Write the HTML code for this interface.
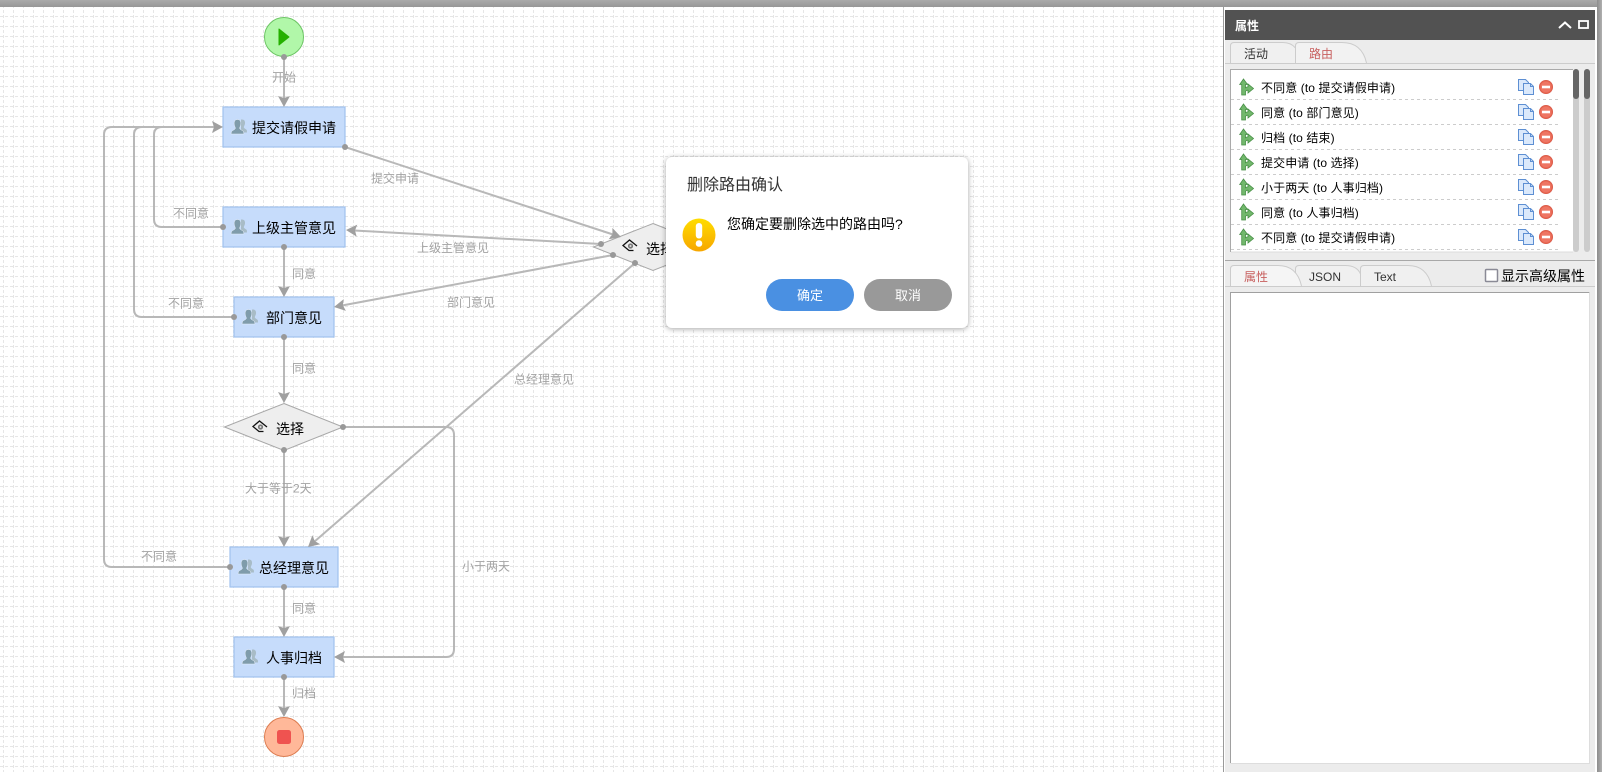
<!DOCTYPE html>
<html lang="zh">
<head>
<meta charset="utf-8">
<title>流程设计器</title>
<style>
html,body{margin:0;padding:0;width:1602px;height:772px;overflow:hidden;background:#fff}
svg{position:absolute;left:0;top:0;display:block}
text{font-family:"Liberation Sans","Noto Sans CJK SC",sans-serif}
.l{font-size:12px;fill:#a3a3a3}
.n{font-size:14px;fill:#000}
.r{font-size:12px;fill:#000;letter-spacing:.1px}
.t{font-size:12px;fill:#333}
.dlg{position:absolute;left:666px;top:157px;width:302px;height:171px;background:#fff;border-radius:6px;box-shadow:0 1px 6px rgba(0,0,0,.35);font-family:"Liberation Sans","Noto Sans CJK SC",sans-serif}
.dlg .ttl{position:absolute;left:21px;top:18px;font-size:16px;line-height:22px;color:#333;white-space:nowrap}
.dlg .msg{position:absolute;left:61px;top:57px;font-size:14px;line-height:20px;color:#000;white-space:nowrap}
.dlg .btn{position:absolute;top:122px;width:88px;height:32px;border-radius:16px;color:#fff;font-size:13px;line-height:34px;text-align:center}
</style>
</head>
<body>
<svg width="1602" height="772" viewBox="0 0 1602 772" xmlns="http://www.w3.org/2000/svg">
<defs>
<pattern id="g" width="10" height="10" patternUnits="userSpaceOnUse" x="0" y="0">
<path d="M3.5 0V3M3.5 5V8M0 6.5H3M5 6.5H8" stroke="#e6e6e6" stroke-width="1" fill="none"/>
</pattern>
<linearGradient id="tb" x1="0" y1="0" x2="0" y2="1"><stop offset="0" stop-color="#aaa"/><stop offset="1" stop-color="#979797"/></linearGradient>
<linearGradient id="rb" x1="0" y1="0" x2="1" y2="0"><stop offset="0" stop-color="#8c8c8c"/><stop offset="1" stop-color="#b0b0b0"/></linearGradient>
<path id="a" d="M0 0L-11 -6L-9 0L-11 6Z" fill="#a0a0a0"/>
<g id="p">
<path d="M11 .5C13.300 .5 14.300 2.300 14 4.500C13.800 6.300 13 7 12.800 8C12.700 9.300 14.600 9.800 15.800 11L16 13.500H10V.5Z" fill="#a8bcc7"/>
<path d="M6.500 .5C9 .5 10 2.500 9.800 5C9.600 7 8.800 8 8.600 9C8.500 10.500 11 11 12.500 12.500L13 15H0L.5 12.500C2 11 4.500 10.500 4.400 9C4.200 8 3.400 7 3.200 5C3 2.500 4 .5 6.500 .5Z" fill="#7f9cab" stroke="#e8f0fb" stroke-width=".5"/>
</g>
<g id="w">
<path d="M16 7L8.500 1L2 6.500L8 11.500L12.500 11.500" fill="none" stroke="#111" stroke-width="1.300"/>
<circle cx="9.500" cy="7" r="2.600" fill="#777"/>
<circle cx="9.500" cy="7" r="1" fill="#ddd"/>
</g>
<g id="ri">
<path d="M4 .5L8 6H6V9.200C6.800 8.600 7.600 8.400 8.500 8.400V5.500L14 10L8.500 14.500V11.700C7.300 11.700 6 12.300 6 13.500V16.500H2.200V6H.2Z" fill="#72b86c" stroke="#478f45" stroke-width=".8"/>
</g>
<g id="ci">
<path d="M.5.500H7.500L10.500 3.500V11.500H.5Z" fill="#dbe9fb" stroke="#5d8fd3"/>
<path d="M5.500 4.500H12.500L15.500 7.500V15.500H5.500Z" fill="#dbe9fb" stroke="#5d8fd3"/>
<path d="M12.500 4.500V7.500H15.500" fill="none" stroke="#5d8fd3"/>
</g>
<g id="di">
<circle cx="7" cy="7" r="6.700" fill="#e8654f" stroke="#d65a4a" stroke-width=".6"/>
<circle cx="7" cy="7" r="5.400" fill="#ee7664"/>
<rect x="3" y="5.700" width="8" height="2.600" fill="#fff"/>
</g>
</defs>

<rect width="1602" height="772" fill="#fff"/>
<rect y="7" width="1223" height="765" fill="url(#g)"/>

<!-- connectors -->
<g fill="none" stroke="#b8b8b8" stroke-width="2">
<path d="M284 57V100"/>
<path d="M284 247V290"/>
<path d="M284 337V396"/>
<path d="M284 450V540"/>
<path d="M284 587V630"/>
<path d="M284 677V710"/>
<path d="M230 567H112Q104 567 104 559V135Q104 127 112 127H215"/>
<path d="M234 317H142Q134 317 134 309V135Q134 127 142 127H215"/>
<path d="M223 227H162Q154 227 154 219V135Q154 127 162 127H215"/>
<path d="M343 427H446Q454 427 454 435V649Q454 657 446 657H342"/>
<path d="M345 147L613 234.500"/>
<path d="M601 244L354 230.500"/>
<path d="M613 255L342 305.500"/>
<path d="M635 263L314 542"/>
</g>

<!-- labels -->
<text class="l" x="272" y="81.500">开始</text>
<text class="l" x="371" y="182.500">提交申请</text>
<text class="l" x="173" y="217.500">不同意</text>
<text class="l" x="417" y="252">上级主管意见</text>
<text class="l" x="292" y="278">同意</text>
<text class="l" x="447" y="306.500">部门意见</text>
<text class="l" x="168" y="307.500">不同意</text>
<text class="l" x="292" y="372.500">同意</text>
<text class="l" x="514" y="383.500">总经理意见</text>
<text class="l" x="245" y="492.500">大于等于2天</text>
<text class="l" x="141" y="560.500">不同意</text>
<text class="l" x="462" y="570.500">小于两天</text>
<text class="l" x="292" y="612.500">同意</text>
<text class="l" x="292" y="697.500">归档</text>

<!-- start -->
<circle cx="284" cy="37" r="19.500" fill="#b1f7a9" stroke="#6cc564"/>
<path d="M279 29L289 37L279 45Z" fill="#25b000" stroke="#25b000" stroke-linejoin="round"/>

<!-- nodes -->
<g fill="#c6dcfb" stroke="#a0c2ee" stroke-width="1.200">
<rect x="223" y="107" width="122" height="40"/>
<rect x="223" y="207" width="122" height="40"/>
<rect x="234" y="297" width="100" height="40"/>
<rect x="230" y="547" width="108" height="40"/>
<rect x="234" y="637" width="100" height="40"/>
</g>
<use href="#p" x="231" y="119"/>
<use href="#p" x="231" y="219"/>
<use href="#p" x="242" y="309"/>
<use href="#p" x="238" y="559"/>
<use href="#p" x="242" y="649"/>
<text class="n" x="252" y="133">提交请假申请</text>
<text class="n" x="252" y="233">上级主管意见</text>
<text class="n" x="266" y="323">部门意见</text>
<text class="n" x="259" y="573">总经理意见</text>
<text class="n" x="266" y="663">人事归档</text>

<!-- gateways -->
<path d="M284 403.500L343 427L284 450.500L224.500 427Z" fill="#eee" stroke="#a8a8a8"/>
<use href="#w" x="251" y="420"/>
<text class="n" x="276" y="434">选择</text>
<path d="M653 223.500L713 247L653 270.500L593.500 247Z" fill="#eee" stroke="#a8a8a8"/>
<use href="#w" x="621" y="239"/>
<text class="n" x="646" y="254">选择</text>

<!-- end -->
<circle cx="284" cy="737" r="19.500" fill="#ffb899" stroke="#dd7c50"/>
<rect x="277" y="730" width="14" height="14" rx="2.500" fill="#ef5350"/>

<!-- arrows -->
<use href="#a" transform="translate(284 107) rotate(90)"/>
<use href="#a" transform="translate(223 127)"/>
<use href="#a" transform="translate(284 297) rotate(90)"/>
<use href="#a" transform="translate(284 403) rotate(90)"/>
<use href="#a" transform="translate(284 547) rotate(90)"/>
<use href="#a" transform="translate(284 637) rotate(90)"/>
<use href="#a" transform="translate(284 717) rotate(90)"/>
<use href="#a" transform="translate(334 657) rotate(180)"/>
<use href="#a" transform="translate(621 237) rotate(18)"/>
<use href="#a" transform="translate(346 230) rotate(183)"/>
<use href="#a" transform="translate(334 307) rotate(169.400)"/>
<use href="#a" transform="translate(308 547) rotate(139)"/>

<!-- ports -->
<g fill="#999">
<circle cx="284" cy="57" r="3"/>
<circle cx="345" cy="147" r="3"/>
<circle cx="223" cy="227" r="3"/>
<circle cx="284" cy="247" r="3"/>
<circle cx="234" cy="317" r="3"/>
<circle cx="284" cy="337" r="3"/>
<circle cx="343" cy="427" r="3"/>
<circle cx="284" cy="450" r="3"/>
<circle cx="230" cy="567" r="3"/>
<circle cx="284" cy="587" r="3"/>
<circle cx="284" cy="677" r="3"/>
<circle cx="601" cy="244" r="3"/>
<circle cx="613" cy="255" r="3"/>
<circle cx="635" cy="263" r="3"/>
</g>

<!-- top bar -->
<rect width="1602" height="7" fill="url(#tb)"/>

<!-- right panel -->
<rect x="1597" y="0" width="5" height="772" fill="url(#rb)"/>
<rect x="1223" y="7" width="1" height="765" fill="#999"/>
<rect x="1224" y="7" width="373" height="765" fill="#fff"/>
<rect x="1225" y="40" width="370" height="732" fill="#ececec"/>
<rect x="1225" y="10" width="370" height="30" fill="#525252"/>
<text x="1235" y="30" font-size="12" font-weight="bold" fill="#fff">属性</text>
<path d="M1559 28L1565 22.500L1571 28" fill="none" stroke="#fff" stroke-width="2"/>
<rect x="1579" y="21" width="9" height="7" fill="none" stroke="#fff" stroke-width="1.800"/>

<!-- upper tabs -->
<rect x="1225" y="63" width="370" height="1" fill="#ccc"/>
<path d="M1230.500 63V46Q1230.500 42.500 1234 42.500H1283Q1291 42.500 1295.500 48V63" fill="#f0f0f0" stroke="#ccc"/>
<path d="M1295.500 63V46Q1295.500 42.500 1299 42.500H1342Q1362 42.500 1366.500 63" fill="#f2f2f2" stroke="#ccc"/>
<text class="t" x="1244" y="58">活动</text>
<text x="1309" y="58" font-size="12" fill="#c8605f">路由</text>

<!-- route list -->
<rect x="1230" y="69" width="343" height="183" fill="#fff"/>
<path d="M1230.500 252V69.500H1573" fill="none" stroke="#aaa"/>
<path d="M1231 252H1573" stroke="#ddd"/>
<rect x="1573" y="69" width="6" height="183" rx="3" fill="#ccc"/>
<rect x="1584" y="69" width="6" height="183" rx="3" fill="#ccc"/>
<rect x="1573" y="69" width="6" height="30" rx="3" fill="#666"/>
<rect x="1584" y="69" width="6" height="30" rx="3" fill="#666"/>
<g stroke="#ccc" stroke-dasharray="3 3" fill="none">
<path d="M1231 99.500H1558"/>
<path d="M1231 124.500H1558"/>
<path d="M1231 149.500H1558"/>
<path d="M1231 174.500H1558"/>
<path d="M1231 199.500H1558"/>
<path d="M1231 224.500H1558"/>
<path d="M1231 249.500H1558"/>
</g>
<use href="#ri" x="1239.500" y="78.500"/><use href="#ci" x="1518" y="79"/><use href="#di" x="1539" y="80"/>
<use href="#ri" x="1239.500" y="103.500"/><use href="#ci" x="1518" y="104"/><use href="#di" x="1539" y="105"/>
<use href="#ri" x="1239.500" y="128.500"/><use href="#ci" x="1518" y="129"/><use href="#di" x="1539" y="130"/>
<use href="#ri" x="1239.500" y="153.500"/><use href="#ci" x="1518" y="154"/><use href="#di" x="1539" y="155"/>
<use href="#ri" x="1239.500" y="178.500"/><use href="#ci" x="1518" y="179"/><use href="#di" x="1539" y="180"/>
<use href="#ri" x="1239.500" y="203.500"/><use href="#ci" x="1518" y="204"/><use href="#di" x="1539" y="205"/>
<use href="#ri" x="1239.500" y="228.500"/><use href="#ci" x="1518" y="229"/><use href="#di" x="1539" y="230"/>
<text class="r" x="1261" y="92">不同意 (to 提交请假申请)</text>
<text class="r" x="1261" y="117">同意 (to 部门意见)</text>
<text class="r" x="1261" y="142">归档 (to 结束)</text>
<text class="r" x="1261" y="167">提交申请 (to 选择)</text>
<text class="r" x="1261" y="192">小于两天 (to 人事归档)</text>
<text class="r" x="1261" y="217">同意 (to 人事归档)</text>
<text class="r" x="1261" y="242">不同意 (to 提交请假申请)</text>

<!-- divider + lower tabs -->
<rect x="1225" y="260" width="370" height="1" fill="#a8a8a8"/>
<rect x="1225" y="286" width="370" height="1" fill="#ccc"/>
<path d="M1360.500 286V269Q1360.500 265.500 1364 265.500H1408Q1427 265.500 1431.500 286" fill="#f0f0f0" stroke="#ccc"/>
<path d="M1295.500 286V269Q1295.500 265.500 1299 265.500H1345Q1357 265.500 1360.500 274V286" fill="#f0f0f0" stroke="#ccc"/>
<path d="M1230.500 286V269Q1230.500 265.500 1234 265.500H1278Q1297 265.500 1301.500 286" fill="#f5f5f5" stroke="#ccc"/>
<text x="1244" y="281" font-size="12" fill="#c8605f">属性</text>
<text class="t" x="1309" y="281">JSON</text>
<text class="t" x="1374" y="281">Text</text>
<rect x="1485.500" y="269.500" width="12" height="12" rx="1" fill="#fff" stroke="#8a8a96" stroke-width="1.500"/>
<text x="1501" y="281" font-size="14" fill="#000">显示高级属性</text>

<rect x="1230" y="292" width="359" height="471" fill="#fff"/>
<path d="M1230.500 763V292.500H1589.500" fill="none" stroke="#a0a0a0"/>
<path d="M1230.500 763.500H1589.500V292.500" fill="none" stroke="#ddd"/>
</svg>

<div class="dlg">
<div class="ttl">删除路由确认</div>
<svg viewBox="0 0 34 34" style="position:absolute;left:16px;top:61px" width="34" height="34">
<defs><linearGradient id="y" x1="0" y1="0" x2="0" y2="1"><stop offset="0" stop-color="#ffdd00"/><stop offset="1" stop-color="#f7a600"/></linearGradient></defs>
<circle cx="17" cy="17" r="16.500" fill="url(#y)"/>
<rect x="13.800" y="5" width="6.400" height="15.500" rx="3.200" fill="#fff"/>
<circle cx="17" cy="25.500" r="3.300" fill="#fff"/>
</svg>
<div class="msg">您确定要删除选中的路由吗?</div>
<div class="btn" style="left:100px;background:#4a90e2">确定</div>
<div class="btn" style="left:198px;background:#999">取消</div>
</div>
</body>
</html>
